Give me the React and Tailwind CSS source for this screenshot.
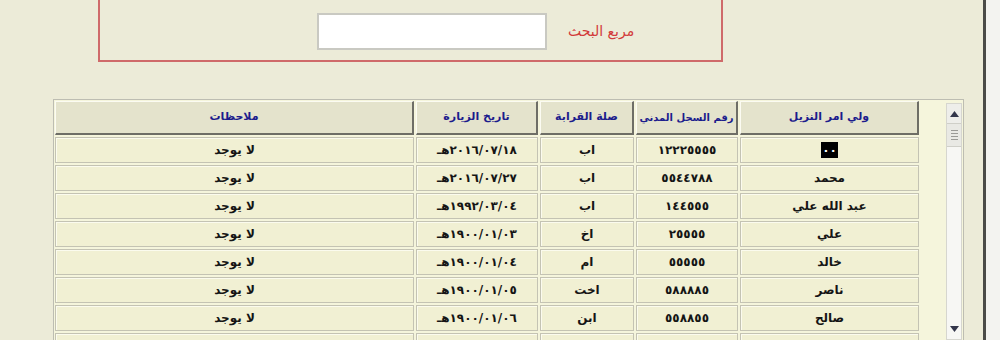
import React from 'react'

const rows = [
  { name: null, id: '١٢٢٢٥٥٥٥', rel: 'اب', date: '٢٠١٦/٠٧/١٨هـ' },
  { name: 'محمد', id: '٥٥٤٤٧٨٨', rel: 'اب', date: '٢٠١٦/٠٧/٢٧هـ' },
  { name: 'عبد الله علي', id: '١٤٤٥٥٥', rel: 'اب', date: '١٩٩٢/٠٣/٠٤هـ' },
  { name: 'علي', id: '٢٥٥٥٥', rel: 'اخ', date: '١٩٠٠/٠١/٠٣هـ' },
  { name: 'خالد', id: '٥٥٥٥٥', rel: 'ام', date: '١٩٠٠/٠١/٠٤هـ' },
  { name: 'ناصر', id: '٥٨٨٨٨٥', rel: 'اخت', date: '١٩٠٠/٠١/٠٥هـ' },
  { name: 'صالح', id: '٥٥٨٨٥٥', rel: 'ابن', date: '١٩٠٠/٠١/٠٦هـ' },
  { name: '', id: '', rel: '', date: '' },
]

const cols = 'grid grid-cols-[179px_102px_94px_122px_359px] gap-x-[2px]'

function Head({ children, small }) {
  return (
    <div className={'h-[34px] flex items-center justify-center whitespace-nowrap bg-[#e4e3cc] border-t border-l border-t-[#fbfbf2] border-l-[#fbfbf2] border-b-2 border-r-2 border-b-[#6e6e66] border-r-[#6e6e66] font-bold text-[#1c1c8c] ' + (small ? 'text-[10px] tracking-[-0.2px]' : 'text-[11px]')}>
      {children}
    </div>
  )
}

function Cell({ children }) {
  return (
    <div className="h-[26px] flex items-center justify-center whitespace-nowrap bg-[#f1f0d3] border border-[#c4c3b3] shadow-[inset_1px_1px_0_#fbfbee] text-[12px] font-bold text-[#151515]">
      {children}
    </div>
  )
}

export default function App() {
  return (
    <div className="w-[1000px] h-[340px] overflow-hidden flex bg-[#ecebd8] font-['DejaVu_Sans',sans-serif]">
      <div className="w-[983px] h-full flex flex-col">
        {/* مربع البحث */}
        <div className="h-[99px] shrink-0">
          <div className="ml-[98px] mt-[-10px] w-[625px] h-[72px] border-2 border-[#cf6a6a] flex items-center pt-[10px]">
            <input className="ml-[217px] w-[230px] h-[37px] bg-white border-2 border-[#c9c9c2] outline-none" />
            <span className="ml-[21px] text-[14px] text-[#d23a3a]" dir="rtl">مربع البحث</span>
          </div>
        </div>

        {/* الجدول */}
        <div className="ml-[53px] w-[911px] flex-1 min-h-0 overflow-hidden border-t border-l border-r border-[#bdbdb2] bg-[#f5f5dc] flex">
          <div className="w-[866px] pt-[1px]" dir="rtl">
            <div className={cols + ' mr-[1px]'}>
              <Head>ولي امر النزيل</Head>
              <Head small>رقم السجل المدني</Head>
              <Head>صلة القرابة</Head>
              <Head>تاريخ الزيارة</Head>
              <Head>ملاحظات</Head>
            </div>
            <div className={cols + ' gap-y-[2px] mt-[2px] mr-[1px]'}>
              {rows.map((r, i) => (
                <React.Fragment key={i}>
                  <Cell>
                    {r.name === null ? (
                      <span className="bg-black text-white px-[1px] leading-[16px]">٠٠</span>
                    ) : (
                      r.name
                    )}
                  </Cell>
                  <Cell>{r.id}</Cell>
                  <Cell>{r.rel}</Cell>
                  <Cell>{r.date}</Cell>
                  <Cell>{r.date ? 'لا يوجد' : ''}</Cell>
                </React.Fragment>
              ))}
            </div>
          </div>
          <div className="flex-1 flex justify-end pt-[3px] pr-[1px]">
            <div className="w-[16px] h-full flex flex-col bg-[#f7f7f4] border border-[#d6d6cf]">
              <div className="h-[20px] flex items-center justify-center bg-[#eeeeea] border-b border-[#cfcfc8]">
                <svg width="9" height="6" viewBox="0 0 9 6"><path d="M0 6 L4.5 0 L9 6 Z" fill="#33364a" /></svg>
              </div>
              <div className="h-[23px] flex flex-col items-center justify-center gap-[2px] bg-[#e9e9e4] border-b border-[#cfcfc8]">
                <div className="w-[7px] h-[1px] bg-[#9a9a96]" />
                <div className="w-[7px] h-[1px] bg-[#9a9a96]" />
                <div className="w-[7px] h-[1px] bg-[#9a9a96]" />
                <div className="w-[7px] h-[1px] bg-[#9a9a96]" />
              </div>
              <div className="flex-1" />
              <div className="h-[19px] flex items-center justify-center mb-[1px]">
                <svg width="9" height="6" viewBox="0 0 9 6"><path d="M0 0 L4.5 6 L9 0 Z" fill="#33364a" /></svg>
              </div>
            </div>
          </div>
        </div>
      </div>
      <div className="w-[3px] h-full bg-[#4b4b48]" />
      <div className="flex-1 h-full bg-[#f3f3f0]" />
    </div>
  )
}
